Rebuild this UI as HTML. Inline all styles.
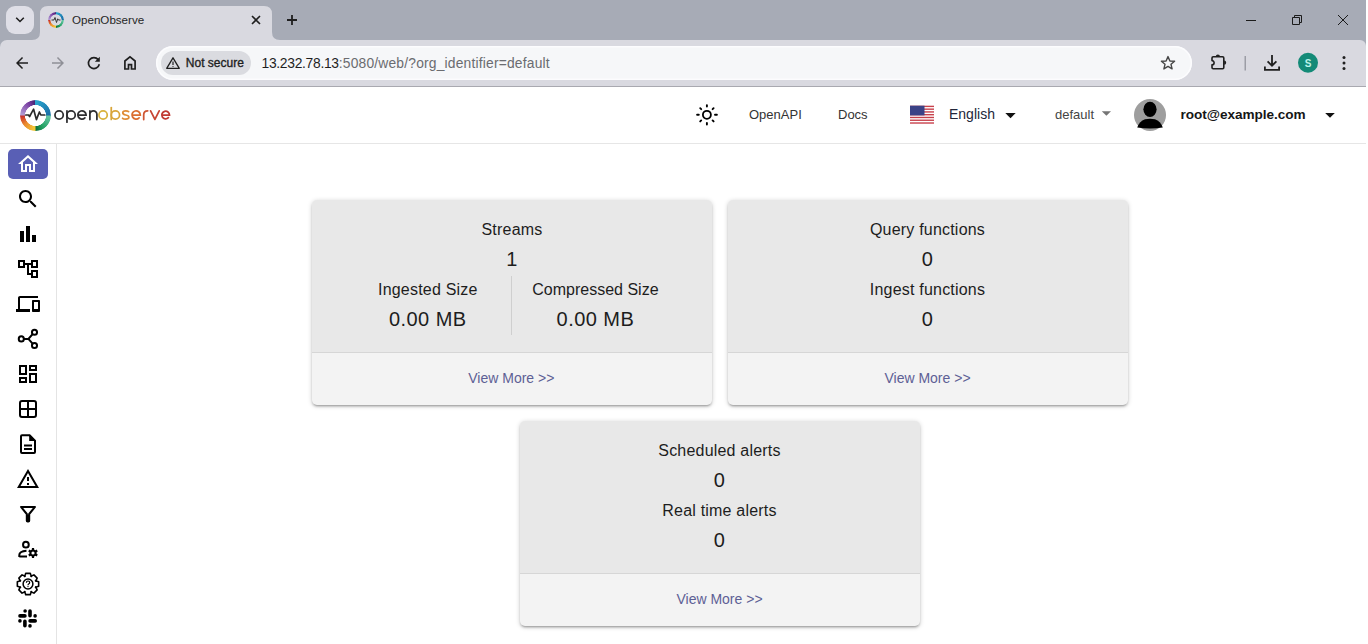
<!DOCTYPE html>
<html><head><meta charset="utf-8">
<style>
*{box-sizing:border-box;margin:0;padding:0}
html,body{width:1368px;height:644px;overflow:hidden;background:#fff;font-family:"Liberation Sans",sans-serif;position:relative}
.abs{position:absolute}
#tabstrip{left:0;top:0;width:1366px;height:50px;background:#a7abb6}
#toolbar{left:0;top:40px;width:1366px;height:46px;background:#d9d9e0;border-top-right-radius:6px;border-top-left-radius:7px}
#tbborder{left:0;top:86px;width:1366px;height:1px;background:#a9a9b0}
#omni{left:156px;top:46px;width:1036px;height:34px;border-radius:17px;background:#f6f7f9;box-shadow:inset 0 0 0 1.5px #fcfcfe}
#chip{left:161px;top:51px;width:90px;height:24px;border-radius:12px;background:#dadbe0}
#hdr{left:0;top:143px;width:1366px;height:1px;background:#e6e6e6}
#side{left:56px;top:144px;width:1px;height:500px;background:#e4e4e4}
#active{left:8px;top:149px;width:40px;height:30px;border-radius:5px;background:#595fb5}
.card{position:absolute;width:400.5px;height:205px;border-radius:5px;background:#f3f3f3;
 box-shadow:0 1px 5px rgba(0,0,0,.2),0 2px 2px rgba(0,0,0,.14),0 3px 1px -2px rgba(0,0,0,.12);overflow:hidden}
.card .top{position:absolute;left:0;top:0;width:100%;height:153px;background:#e8e8e8;border-bottom:1px solid #d6d6d6}
.t{position:absolute;white-space:nowrap;line-height:1}
.c{position:absolute;white-space:nowrap;line-height:1;text-align:center;width:300px;color:#1d1d1d}
.more{color:#5d6095;font-size:14px}
</style></head><body>
<div id="tabstrip" class="abs"></div>
<!-- tab -->
<svg class="abs" style="left:0;top:0" width="1368" height="644" viewBox="0 0 1368 644">
  <!-- dropdown button -->
  <rect x="6" y="6" width="28" height="28" rx="9" fill="#dfdfe7"/>
  <path d="M16.2 17.8 L20 21.5 L23.8 17.8" fill="none" stroke="#1f1f1f" stroke-width="1.6"/>
  <!-- active tab shape -->
  <path d="M32 40 Q40 40 40 32 V14 Q40 6 48 6 H264 Q272 6 272 14 V32 Q272 40 280 40 Z" fill="#d9d9e0"/>
</svg>
<div id="toolbar" class="abs"></div>
<div id="tbborder" class="abs"></div>
<div class="abs" style="left:1366px;top:0;width:2px;height:644px;background:#fff"></div>
<div id="omni" class="abs"></div>
<div id="chip" class="abs"></div>

<div id="hdr" class="abs"></div>
<div id="side" class="abs"></div>
<div id="active" class="abs"></div>

<!-- Tab text -->
<div class="t" style="left:72px;top:14.1px;font-size:11.6px;color:#262626">OpenObserve</div>
<div class="t" style="left:185.8px;top:57.3px;font-size:12px;-webkit-text-stroke:0.35px #1f1f1f;color:#1f1f1f">Not secure</div>
<div class="t" style="left:261.5px;top:56.8px;font-size:13.85px;color:#1f1f1f"><span style="letter-spacing:-0.3px">13.232.78.13</span><span style="color:#6b6c70;letter-spacing:0.18px">:5080/web/?org_identifier=default</span></div>

<!-- header text -->
<div class="t" style="left:749px;top:108.1px;font-size:13px;color:#333">OpenAPI</div>
<div class="t" style="left:838px;top:108.1px;font-size:13px;color:#333">Docs</div>
<div class="t" style="left:949px;top:107.1px;font-size:14px;color:#22263a">English</div>
<div class="t" style="left:1055px;top:107.6px;font-size:13px;color:#444">default</div>
<div class="t" style="left:1180.5px;top:108.3px;font-size:13.6px;font-weight:bold;letter-spacing:-0.05px;color:#161616">root@example.com</div>

<!-- cards -->
<div class="card" style="left:311.5px;top:200px"><div class="top"></div></div>
<div class="card" style="left:727.5px;top:200px"><div class="top"></div></div>
<div class="card" style="left:519.5px;top:421px"><div class="top"></div></div>
<div class="abs" style="left:511px;top:276px;width:1px;height:59px;background:#cfcfcf"></div>

<div class="c" style="left:362px;top:221.5px;font-size:16px;letter-spacing:0.2px">Streams</div>
<div class="c" style="left:362px;top:248.9px;font-size:20px;letter-spacing:0.45px">1</div>
<div class="c" style="left:277.8px;top:281.7px;font-size:16px;letter-spacing:0.2px">Ingested Size</div>
<div class="c" style="left:445.4px;top:281.7px;font-size:16px">Compressed Size</div>
<div class="c" style="left:277.8px;top:309px;font-size:20px;letter-spacing:0.45px">0.00 MB</div>
<div class="c" style="left:445.4px;top:309px;font-size:20px;letter-spacing:0.45px">0.00 MB</div>
<div class="c more" style="left:361.3px;top:370.9px">View More &gt;&gt;</div>

<div class="c" style="left:777.5px;top:221.5px;font-size:16px;letter-spacing:0.2px">Query functions</div>
<div class="c" style="left:777.5px;top:248.9px;font-size:20px;letter-spacing:0.45px">0</div>
<div class="c" style="left:777.5px;top:281.7px;font-size:16px;letter-spacing:0.2px">Ingest functions</div>
<div class="c" style="left:777.5px;top:309px;font-size:20px;letter-spacing:0.45px">0</div>
<div class="c more" style="left:777.5px;top:370.9px">View More &gt;&gt;</div>

<div class="c" style="left:569.5px;top:442.5px;font-size:16px;letter-spacing:0.2px">Scheduled alerts</div>
<div class="c" style="left:569.5px;top:469.9px;font-size:20px;letter-spacing:0.45px">0</div>
<div class="c" style="left:569.5px;top:502.7px;font-size:16px;letter-spacing:0.2px">Real time alerts</div>
<div class="c" style="left:569.5px;top:530px;font-size:20px;letter-spacing:0.45px">0</div>
<div class="c more" style="left:569.5px;top:591.9px">View More &gt;&gt;</div>

<!-- icons overlay -->
<svg class="abs" style="left:0;top:0" width="1368" height="644" viewBox="0 0 1368 644">
  <!-- tab close -->
  <path d="M252 16 L260 24 M260 16 L252 24" stroke="#1f1f1f" stroke-width="1.6"/>
  <!-- new tab plus -->
  <path d="M287 20 H297 M292 15 V25" stroke="#1f1f1f" stroke-width="1.8"/>
  <!-- window controls -->
  <path d="M1246 20.5 H1256" stroke="#1b1b1b" stroke-width="1"/>
  <path d="M1292.5 17.5 H1299.5 V24.5 H1292.5 Z M1294.5 17.5 V15.5 H1301.5 V22.5 H1299.5" fill="none" stroke="#1b1b1b" stroke-width="1"/>
  <path d="M1338 15 L1348 25 M1348 15 L1338 25" stroke="#1b1b1b" stroke-width="1"/>
  <!-- back / forward -->
  <g transform="translate(13,54) scale(0.75)"><path d="M20 11H7.83l5.59-5.59L12 4l-8 8 8 8 1.41-1.41L7.83 13H20v-2z" fill="#1f1f1f"/></g>
  <g transform="translate(67,54) scale(-0.75,0.75)"><path d="M20 11H7.83l5.59-5.59L12 4l-8 8 8 8 1.41-1.41L7.83 13H20v-2z" fill="#8f9097"/></g>
  <!-- reload -->
  <path d="M98.2 59.6 A5.5 5.5 0 1 0 99.3 64.3" fill="none" stroke="#1f1f1f" stroke-width="1.7"/>
  <path d="M99.8 56.8 V61.8 H94.8 Z" fill="#1f1f1f"/>
  <!-- home -->
  <path d="M124.9 69 V61 L130 56.9 L135.1 61 V69 H131.5 V64.6 H128.5 V69 Z" fill="none" stroke="#1f1f1f" stroke-width="1.7" stroke-linejoin="miter"/>
  <!-- warning triangle in chip -->
  <path d="M173 57.8 L179.3 68.3 H166.7 Z" fill="none" stroke="#1f1f1f" stroke-width="1.3" stroke-linejoin="round"/>
  <path d="M173 61.5 V65" stroke="#1f1f1f" stroke-width="1.2"/>
  <circle cx="173" cy="66.5" r="0.6" fill="#1f1f1f"/>
  <!-- star -->
  <path d="M1168 56.6 L1169.9 61 L1174.6 61.3 L1171 64.3 L1172.1 68.9 L1168 66.4 L1163.9 68.9 L1165 64.3 L1161.4 61.3 L1166.1 61 Z" fill="none" stroke="#474747" stroke-width="1.4" stroke-linejoin="round"/>
  <!-- puzzle -->
  <path d="M1212 58 Q1212 56.8 1213.2 56.8 H1222.6 Q1223.8 56.8 1223.8 58 V67.6 Q1223.8 68.8 1222.6 68.8 H1213.2 Q1212 68.8 1212 67.6 V64.8 A2.1 2.1 0 0 0 1212 60.6 Z" fill="none" stroke="#1f1f1f" stroke-width="1.6" stroke-linejoin="round"/>
  <path d="M1215.8 56.6 A2.1 2.1 0 0 1 1220 56.6 Z" fill="#1f1f1f"/>
  <path d="M1224.1 60.6 A2.1 2.1 0 0 1 1224.1 64.8 Z" fill="#1f1f1f"/>
  <!-- separator -->
  <rect x="1244.5" y="56" width="1.5" height="14.5" fill="#9c9da5"/>
  <!-- download -->
  <path d="M1272 55 V65.5 M1267.6 61.3 L1272 65.7 L1276.4 61.3" fill="none" stroke="#1f1f1f" stroke-width="1.8"/>
  <path d="M1264.9 66.5 V69.9 H1279.1 V66.5" fill="none" stroke="#1f1f1f" stroke-width="1.8"/>
  <!-- avatar -->
  <circle cx="1308" cy="62.8" r="10" fill="#138a77"/>
  <!-- menu dots -->
  <circle cx="1344" cy="57.4" r="1.5" fill="#1f1f1f"/>
  <circle cx="1344" cy="63" r="1.5" fill="#1f1f1f"/>
  <circle cx="1344" cy="68.6" r="1.5" fill="#1f1f1f"/>

  <!-- header sun -->
  <g stroke="#000" fill="none" stroke-linecap="round">
    <circle cx="706.9" cy="114.8" r="4.0" stroke-width="1.8"/>
    <path stroke-width="1.9" d="M706.9 105.1 V106.6 M706.9 123 V124.6 M697.1 114.8 H698.8 M715 114.8 H716.9 M700.2 108.2 L701.2 109.2 M713.6 108.2 L712.6 109.2 M700.2 121.4 L701.2 120.4 M713.6 121.4 L712.6 120.4"/>
  </g>
  <!-- flag -->
  <g transform="translate(910,105.7)">
    <rect width="24" height="18" fill="#fff"/>
    <g fill="#c8414b">
      <rect y="0" width="24" height="1.385"/><rect y="2.77" width="24" height="1.385"/><rect y="5.54" width="24" height="1.385"/>
      <rect y="8.31" width="24" height="1.385"/><rect y="11.08" width="24" height="1.385"/><rect y="13.85" width="24" height="1.385"/>
      <rect y="16.62" width="24" height="1.385"/>
    </g>
    <rect width="14.5" height="9.7" fill="#3b4286"/>
  </g>
  <!-- carets -->
  <path d="M1005.3 113 H1015.7 L1010.5 118.2 Z" fill="#111"/>
  <path d="M1101.8 111.2 H1111 L1106.4 115.8 Z" fill="#757575"/>
  <path d="M1325.2 113 H1334.8 L1330 117.8 Z" fill="#111"/>
  <!-- user avatar -->
  <circle cx="1150" cy="115" r="16" fill="#9e9e9e"/>
  <ellipse cx="1150" cy="109.3" rx="6.6" ry="7.6" fill="#000"/>
  <path d="M1137.2 127.6 Q1139.5 121.2 1145 119.3 Q1150 118.4 1155 119.3 Q1160.5 121.2 1162.8 127.6 Q1156 128.6 1150 128.6 Q1144 128.6 1137.2 127.6 Z" fill="#000"/>

  <!-- sidebar icons -->
  <g transform="translate(16,152)"><path d="M12 5.69l5 4.5V18h-2v-6H9v6H7v-7.81l5-4.5M12 3L2 12h3v8h6v-6h2v6h6v-8h3L12 3z" fill="#fff"/></g>
  <g transform="translate(16,187)"><path d="M15.5 14h-.79l-.28-.27C15.41 12.59 16 11.11 16 9.5 16 5.91 13.09 3 9.5 3S3 5.91 3 9.5 5.91 16 9.5 16c1.61 0 3.090-.59 4.23-1.57l.27.28v.79l5 4.99L20.49 19l-4.99-5zm-6 0C7.01 14 5 11.99 5 9.5S7.01 5 9.5 5 14 7.01 14 9.5 11.99 14 9.5 14z" fill="#000"/></g>
  <g transform="translate(16,222)"><path d="M4 9h4v11H4zm12 4h4v7h-4zm-6-9h4v16h-4z" fill="#000"/></g>
  <g transform="translate(16,257)"><path d="M22 11V3h-7v3H9V3H2v8h7V8h2v10h4v3h7v-8h-7v3h-2V8h2v3h7zM7 9H4V5h3v4zm10 6h3v4h-3v-4zm0-10h3v4h-3V5z" fill="#000"/></g>
  <g transform="translate(16,292)"><path d="M4 6h18V4H4c-1.1 0-2 .9-2 2v11H0v3h14v-3H4V6zm19 2h-6c-.55 0-1 .45-1 1v10c0 .55.45 1 1 1h6c.55 0 1-.45 1-1V9c0-.55-.45-1-1-1zm-1 9h-4v-7h4v7z" fill="#000"/></g>
  <g fill="none" stroke="#000" stroke-width="2">
    <circle cx="21.3" cy="338.9" r="2.55"/><circle cx="34.5" cy="332.3" r="2.55"/><circle cx="34.5" cy="345.5" r="2.55"/>
    <path d="M23.8 338.9 H28.4 L32.6 334.2 M28.4 338.9 L32.6 343.6"/>
  </g>
  <g transform="translate(16,362)"><path d="M19 5v2h-4V5h4M9 5v6H5V5h4m10 8v6h-4v-6h4M9 17v2H5v-2h4M21 3h-8v6h8V3zM11 3H3v10h8V3zm10 8h-8v10h8V11zm-10 4H3v6h8v-6z" fill="#000"/></g>
  <g fill="none" stroke="#000" stroke-width="2">
    <rect x="20" y="401" width="16" height="16" rx="2"/>
    <path d="M28 401 V417 M20 409 H36"/>
  </g>
  <!-- description -->
  <path d="M21 436.2 Q21 435.2 22 435.2 H29.6 L35 440.6 V452 Q35 453 34 453 H22 Q21 453 21 452 Z" fill="none" stroke="#000" stroke-width="2" stroke-linejoin="round"/>
  <path d="M29.2 434.6 L35.6 441 H29.2 Z" fill="#000"/>
  <path d="M24 445.5 H32 M24 449 H32" stroke="#000" stroke-width="1.8"/>
  <!-- warning -->
  <g transform="translate(16,467)"><path d="M12 5.99L19.53 19H4.47L12 5.99M12 2L1 21h22L12 2zm1 14h-2v2h2v-2zm0-6h-2v4h2v-4z" fill="#000"/></g>
  <!-- filter -->
  <path d="M21 506.9 H35 L29.2 514 V520.8 Q29.2 521.6 28.4 521.6 H27.6 Q26.8 521.6 26.8 520.8 V514 Z" fill="none" stroke="#000" stroke-width="2" stroke-linejoin="round"/>
  <path d="M26.6 514.5 H29.4 V521.4 H26.6 Z" fill="#000"/>
  <!-- manage accounts -->
  <circle cx="25.9" cy="544.7" r="2.85" fill="none" stroke="#000" stroke-width="2"/>
  <path d="M19.3 557 V555 Q19.3 551.5 26.5 550.8" fill="none" stroke="#000" stroke-width="2"/>
  <path d="M19.3 556.5 H27" stroke="#000" stroke-width="2"/>
  <g transform="translate(33,553)">
    <circle r="2.6" fill="none" stroke="#000" stroke-width="2"/>
    <path d="M2.60 1.50 L4.24 2.45 M0.00 3.00 L0.00 4.90 M-2.60 1.50 L-4.24 2.45 M-2.60 -1.50 L-4.24 -2.45 M-0.00 -3.00 L-0.00 -4.90 M2.60 -1.50 L4.24 -2.45" stroke="#000" stroke-width="2.2"/>
  </g>
  <!-- gear help -->
  <g transform="translate(28,584)">
    <path d="M-3.34 -7.49 L-2.27 -10.66 L2.27 -10.66 L3.34 -7.49 L2.94 -7.66 L5.94 -9.14 L9.14 -5.94 L7.66 -2.94 L7.49 -3.34 L10.66 -2.27 L10.66 2.27 L7.49 3.34 L7.66 2.94 L9.14 5.94 L5.94 9.14 L2.94 7.66 L3.34 7.49 L2.27 10.66 L-2.27 10.66 L-3.34 7.49 L-2.94 7.66 L-5.94 9.14 L-9.14 5.94 L-7.66 2.94 L-7.49 3.34 L-10.66 2.27 L-10.66 -2.27 L-7.49 -3.34 L-7.66 -2.94 L-9.14 -5.94 L-5.94 -9.14 L-2.94 -7.66 Z" fill="none" stroke="#000" stroke-width="1.6" stroke-linejoin="round"/>
    <circle r="4.9" fill="none" stroke="#000" stroke-width="1.5"/>
    <path d="M-1.6 -1.3 Q-1.6 -3 0 -3 Q1.7 -3 1.7 -1.5 Q1.7 -0.5 0.6 0 Q0 0.3 0 1.2" fill="none" stroke="#000" stroke-width="1.2"/>
    <circle cx="0" cy="2.6" r="0.7" fill="#000"/>
  </g>
  <!-- slack -->
  <g fill="#000" stroke="#000" stroke-linecap="round" stroke-width="3.6">
    <path d="M30 611.1 V615.7 M20 615.9 H24.9 M30.1 620.9 H35.2 M24.9 621.2 V625.8"/>
    <path d="M25.1 611 L25.1 611" /><path d="M35.1 615.9 L35.1 615.9"/><path d="M19.95 620.9 L19.95 620.9"/><path d="M30 625.9 L30 625.9"/>
  </g>
</svg>
<!-- avatar S -->
<div class="t" style="left:1298px;top:59.3px;width:20px;text-align:center;font-size:10px;font-weight:bold;color:#b9f3e9">S</div>

<!-- logo -->
<div class="abs" style="left:20px;top:99.5px;width:31px;height:31px;border-radius:50%;
 background:conic-gradient(from 0deg,#2aa6cf 0deg,#1a6ea6 88deg,#66c7a6 92deg,#22a060 150deg,#0f6e3c 178deg,#f4cd3a 182deg,#eb8a2e 230deg,#c9302c 268deg,#b49fd6 272deg,#7a3fa2 330deg,#4a2575 356deg,#2aa6cf 360deg);
 -webkit-mask:radial-gradient(circle,transparent 10.2px,#000 10.8px);mask:radial-gradient(circle,transparent 10.2px,#000 10.8px)"></div>
<svg class="abs" style="left:0;top:0" width="200" height="140" viewBox="0 0 200 140">
  <path d="M25.8 115 H28.6 L29.6 116.6 L31 113.8 L33.6 109.2 L36.4 119.6 L39.4 112 L40.8 115 H44.8" fill="none" stroke="#2a2a2a" stroke-width="1.7" stroke-linejoin="round" stroke-linecap="round"/>
</svg>
<svg class="abs" style="left:0;top:0" width="200" height="140" viewBox="0 0 200 140">
  <g fill="none" stroke-width="1.75" stroke-linecap="round">
    <circle cx="59.1" cy="115" r="4.15" stroke="#2e2e30"/>
    <circle cx="71.1" cy="115" r="4.15" stroke="#2e2e30"/>
    <path d="M66.95 110.8 V122.2" stroke="#2e2e30"/>
    <path d="M77.9 115 H86.1 A4.15 4.15 0 1 0 84.9 117.9" stroke="#2e2e30"/>
    <path d="M89.9 110.9 V119.6 M89.9 114.3 A3.5 3.5 0 0 1 96.9 114.3 V119.6" stroke="#2e2e30"/>
    <circle cx="103.1" cy="115" r="4.15" stroke="#d9b23d"/>
    <circle cx="115.4" cy="115" r="4.15" stroke="#d9a53a"/>
    <path d="M111.25 107.5 V119.4" stroke="#d9a53a"/>
    <path d="M128.6 111.6 Q127.6 110.8 125.7 110.8 Q122.8 110.8 122.8 112.8 Q122.8 114.6 125.7 115 Q128.9 115.4 128.9 117.3 Q128.9 119.2 125.6 119.2 Q123.5 119.2 122.6 118.3" stroke="#df8c36"/>
    <path d="M132.1 115 H140.3 A4.15 4.15 0 1 0 139.1 117.9" stroke="#db6e31"/>
    <path d="M143.7 119.6 V114.8 Q143.7 110.8 147.7 110.8" stroke="#cf5634"/>
    <path d="M150.6 110.9 L154.9 119.4 L159.2 110.9" stroke="#c74634" stroke-linejoin="round"/>
    <path d="M161.9 115 H169.5 A3.85 3.85 0 1 0 168.4 117.7" stroke="#c13a33"/>
  </g>
</svg>

<!-- tab favicon -->
<div class="abs" style="left:48px;top:12px;width:16px;height:16px;border-radius:50%;
 background:conic-gradient(from 0deg,#2aa6cf 0deg,#1a6ea6 88deg,#66c7a6 92deg,#22a060 150deg,#0f6e3c 178deg,#f4cd3a 182deg,#eb8a2e 230deg,#c9302c 268deg,#b49fd6 272deg,#7a3fa2 330deg,#4a2575 356deg,#2aa6cf 360deg);
 -webkit-mask:radial-gradient(circle,transparent 5.3px,#000 5.9px);mask:radial-gradient(circle,transparent 5.3px,#000 5.9px)"></div>
<svg class="abs" style="left:0;top:0" width="80" height="40" viewBox="0 0 80 40">
  <path d="M51.5 20 H54 L55 17.5 L56.5 22.5 L57.7 18.8 L58.5 20 H60.5" fill="none" stroke="#333" stroke-width="1" stroke-linejoin="round"/>
</svg>
</body></html>
